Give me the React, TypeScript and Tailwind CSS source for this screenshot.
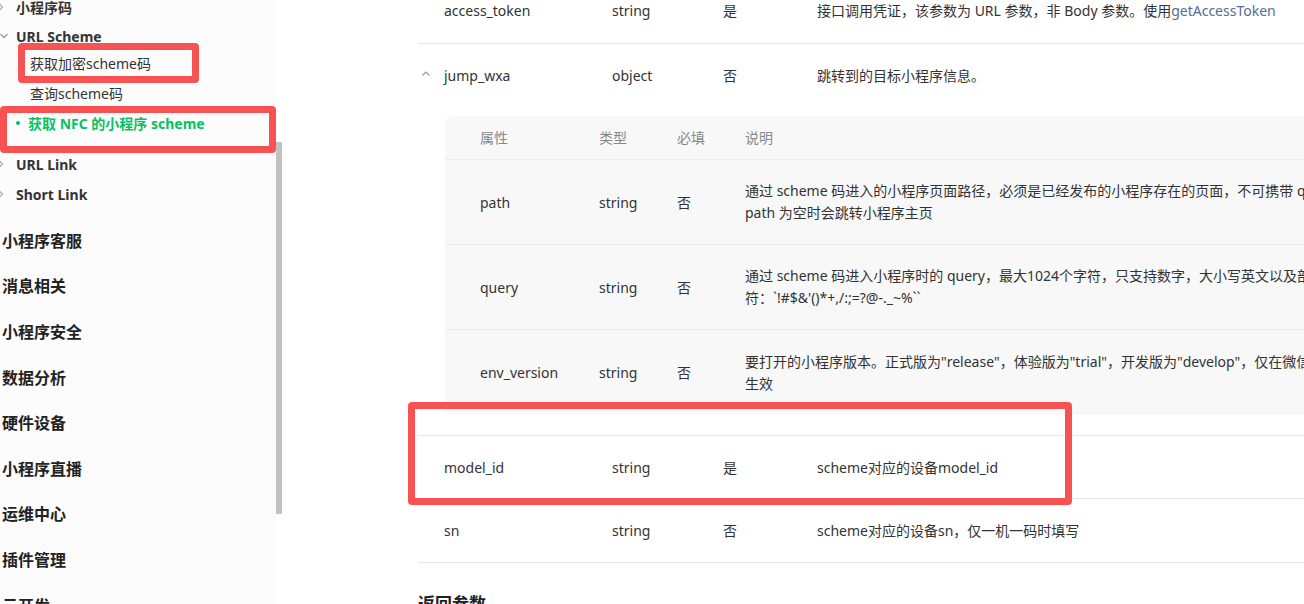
import React from 'react';

const font = "font-['Noto_Sans','Noto_Sans_CJK_SC',sans-serif]";

const ChevronRight = () => (
  <svg width="8" height="10" viewBox="0 0 8 10" className="shrink-0">
    <path d="M2 1.5 L5.5 5 L2 8.5" fill="none" stroke="#b2b2b2" strokeWidth="1.3" />
  </svg>
);

const ChevronDown = () => (
  <svg width="10" height="8" viewBox="0 0 10 8" className="shrink-0">
    <path d="M1.5 2 L5 5.5 L8.5 2" fill="none" stroke="#999" strokeWidth="1.3" />
  </svg>
);

const ChevronUp = () => (
  <svg width="10" height="8" viewBox="0 0 10 8" className="shrink-0">
    <path d="M1.5 5.5 L5 2 L8.5 5.5" fill="none" stroke="#999" strokeWidth="1.2" />
  </svg>
);

const topLevel = ['小程序客服', '消息相关', '小程序安全', '数据分析', '硬件设备', '小程序直播', '运维中心', '插件管理', '云开发'];

const Sidebar = () => (
  <aside className="relative w-[276px] shrink-0 bg-[#fcfcfc] h-[604px] overflow-hidden">
    <div className="flex flex-col mt-[-8px]">
      {/* level 2 */}
      <div className="flex items-center h-[30px] -ml-[3px] gap-[11px]">
        <ChevronRight />
        <span className="text-[14px] font-bold text-[#333]">小程序码</span>
      </div>
      <div className="flex items-center h-[28px] -ml-[1px] gap-[7px]">
        <ChevronDown />
        <span className="text-[14px] font-bold text-[#333]">URL Scheme</span>
      </div>
      <div className="flex items-center h-[27px] pl-[30px] text-[14px] text-[#333]">获取加密scheme码</div>
      <div className="flex items-center h-[32px] pl-[30px] text-[14px] text-[#333]">查询scheme码</div>
      <div className="flex items-center h-[28px] pl-[16px] gap-[8px] text-[14px] font-bold text-[#07c160]">
        <span className="w-[4px] h-[4px] rounded-full bg-[#07c160]" />
        <span>获取 NFC 的小程序 scheme</span>
      </div>
      <div className="h-[12px]" />
      <div className="flex items-center h-[30px] -ml-[3px] gap-[11px]">
        <ChevronRight />
        <span className="text-[14px] font-bold text-[#333]">URL Link</span>
      </div>
      <div className="flex items-center h-[30px] -ml-[3px] gap-[11px]">
        <ChevronRight />
        <span className="text-[14px] font-bold text-[#333]">Short Link</span>
      </div>
      <div className="h-[9px]" />
      {topLevel.map((t) => (
        <div key={t} className="flex items-center h-[45.6px] pl-[2px] text-[16px] font-bold text-[#222]">
          {t}
        </div>
      ))}
    </div>
  </aside>
);

const outerCols = 'grid grid-cols-[168px_111px_94px_1fr] pl-[26px] items-center text-[14px] text-[#333]';
const innerCols = 'grid grid-cols-[119px_78px_68px_1fr] pl-[35px] items-center text-[14px] text-[#333]';

const nestedRows = [
  {
    name: 'path',
    lines: ['通过 scheme 码进入的小程序页面路径，必须是已经发布的小程序存在的页面，不可携带 query。', 'path 为空时会跳转小程序主页'],
  },
  {
    name: 'query',
    lines: ['通过 scheme 码进入小程序时的 query，最大1024个字符，只支持数字，大小写英文以及部分特殊字', "符：`!#$&'()*+,/:;=?@-._~%``"],
  },
  {
    name: 'env_version',
    lines: ['要打开的小程序版本。正式版为"release"，体验版为"trial"，开发版为"develop"，仅在微信外打开时', '生效'],
  },
];

const Main = () => (
  <main className="flex-1 h-[604px] overflow-hidden pl-[136px] bg-white">
    <div className="w-[1100px] mt-[-22px]">
      {/* access_token */}
      <div className={`${outerCols} h-[66px] border-b border-[#e5e5e5]`}>
        <span>access_token</span>
        <span>string</span>
        <span>是</span>
        <span className="whitespace-nowrap">
          接口调用凭证，该参数为 URL 参数，非 Body 参数。使用<span className="text-[#576b95]">getAccessToken</span>
        </span>
      </div>

      {/* jump_wxa */}
      <div className="border-b border-[#e5e5e5] pb-[20px]">
        <div className={`${outerCols} h-[63px] relative`}>
          <span className="absolute left-[3px] top-[26px]">
            <ChevronUp />
          </span>
          <span>jump_wxa</span>
          <span>object</span>
          <span>否</span>
          <span>跳转到的目标小程序信息。</span>
        </div>
        <div className="ml-[27px] mt-[9px] bg-[#f8f8f8] rounded-l-[8px]">
          <div className={`${innerCols} h-[44px] border-b border-[#ececec] text-[#888]`}>
            <span>属性</span>
            <span>类型</span>
            <span>必填</span>
            <span>说明</span>
          </div>
          {nestedRows.map((r, i) => (
            <div
              key={r.name}
              className={`${innerCols} h-[85px] ${i < nestedRows.length - 1 ? 'border-b border-[#ececec]' : ''}`}
            >
              <span>{r.name}</span>
              <span>string</span>
              <span>否</span>
              <div className="flex flex-col leading-[22px] whitespace-nowrap">
                {r.lines.map((l) => (
                  <span key={l}>{l}</span>
                ))}
              </div>
            </div>
          ))}
        </div>
      </div>

      {/* model_id */}
      <div className={`${outerCols} h-[63px] border-b border-[#e5e5e5]`}>
        <span>model_id</span>
        <span>string</span>
        <span>是</span>
        <span>scheme对应的设备model_id</span>
      </div>

      {/* sn */}
      <div className={`${outerCols} h-[64px] border-b border-[#e5e5e5]`}>
        <span>sn</span>
        <span>string</span>
        <span>否</span>
        <span>scheme对应的设备sn，仅一机一码时填写</span>
      </div>

      <h3 className="mt-[28px] text-[17px] font-bold text-[#222]">返回参数</h3>
    </div>
  </main>
);

export default function App() {
  return (
    <div className={`relative flex w-[1304px] h-[604px] overflow-hidden bg-white ${font}`}>
      <Sidebar />
      {/* scrollbar */}
      <div className="w-[6px] shrink-0 h-[604px] bg-white">
        <div className="mt-[142px] h-[372px] bg-[#c1c1c1]" />
      </div>
      <Main />

      {/* annotation boxes */}
      <div className="absolute left-[18px] top-[43px] w-[181px] h-[40px] border-[7px] border-[#f85252] rounded-[4px] pointer-events-none" />
      <div className="absolute left-0 top-[106px] w-[276px] h-[47px] border-[7px] border-[#f85252] rounded-[4px] pointer-events-none" />
      <div className="absolute left-[408px] top-[402px] w-[664px] h-[103px] border-[7px] border-[#f85252] rounded-[4px] pointer-events-none" />
    </div>
  );
}
